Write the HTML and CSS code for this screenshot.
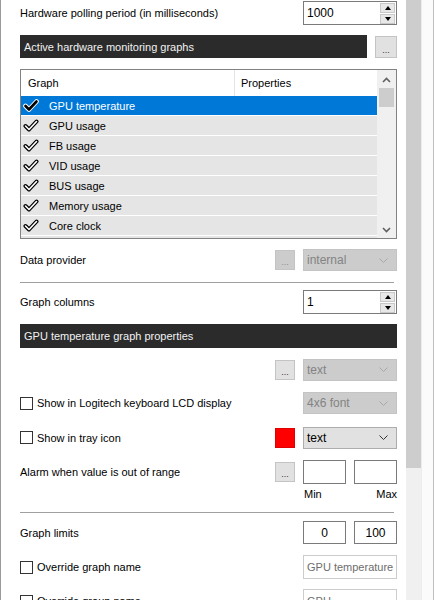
FILE: index.html
```html
<!DOCTYPE html>
<html lang="en">
<head>
    <meta charset="UTF-8">
    <meta name="viewport" content="width=device-width, initial-scale=1.0">
    <title>Monitoring properties</title>
    <link rel="stylesheet" href="styles.css">
</head>
<body>
    <div class="window">
        <div class="panel">
            <div class="row row-poll">
                <span class="label">Hardware polling period (in milliseconds)</span>
                <div class="spin">
                    <span class="spin-value">1000</span>
                    <div class="spin-btns"><span class="spin-btn"><i class="tri-up"></i></span><span class="spin-btn"><i class="tri-down"></i></span></div>
                </div>
            </div>

            <div class="row row-section1">
                <div class="section-title short">Active hardware monitoring graphs</div>
                <span class="dots">...</span>
            </div>

            <div class="list">
                <div class="list-main">
                    <div class="list-head"><span class="col-graph">Graph</span><span class="col-props">Properties</span></div>
                    <div class="list-item selected"><svg class="check" viewBox="0 0 16 14"><path d="M2.5 7 L6 10.5 L13.5 2.5" class="check-out"/><path d="M2.5 7 L6 10.5 L13.5 2.5" class="check-in"/></svg>GPU temperature</div>
                    <div class="list-item"><svg class="check" viewBox="0 0 16 14"><path d="M2.5 7 L6 10.5 L13.5 2.5" class="check-out"/><path d="M2.5 7 L6 10.5 L13.5 2.5" class="check-in"/></svg>GPU usage</div>
                    <div class="list-item"><svg class="check" viewBox="0 0 16 14"><path d="M2.5 7 L6 10.5 L13.5 2.5" class="check-out"/><path d="M2.5 7 L6 10.5 L13.5 2.5" class="check-in"/></svg>FB usage</div>
                    <div class="list-item"><svg class="check" viewBox="0 0 16 14"><path d="M2.5 7 L6 10.5 L13.5 2.5" class="check-out"/><path d="M2.5 7 L6 10.5 L13.5 2.5" class="check-in"/></svg>VID usage</div>
                    <div class="list-item"><svg class="check" viewBox="0 0 16 14"><path d="M2.5 7 L6 10.5 L13.5 2.5" class="check-out"/><path d="M2.5 7 L6 10.5 L13.5 2.5" class="check-in"/></svg>BUS usage</div>
                    <div class="list-item"><svg class="check" viewBox="0 0 16 14"><path d="M2.5 7 L6 10.5 L13.5 2.5" class="check-out"/><path d="M2.5 7 L6 10.5 L13.5 2.5" class="check-in"/></svg>Memory usage</div>
                    <div class="list-item"><svg class="check" viewBox="0 0 16 14"><path d="M2.5 7 L6 10.5 L13.5 2.5" class="check-out"/><path d="M2.5 7 L6 10.5 L13.5 2.5" class="check-in"/></svg>Core clock</div>
                    <div class="list-peek"></div>
                </div>
                <div class="list-scroll">
                    <svg class="arrow" viewBox="0 0 9 6"><polyline points="1,5 4.5,1.5 8,5"/></svg>
                    <span class="list-thumb"></span>
                    <svg class="arrow arrow-down" viewBox="0 0 9 6"><polyline points="1,1 4.5,4.5 8,1"/></svg>
                </div>
            </div>

            <div class="row row-provider">
                <span class="label">Data provider</span>
                <div class="ctrls">
                    <span class="dots disabled">...</span>
                    <div class="combo disabled">internal<svg class="chev" viewBox="0 0 9 5"><polyline points="0.5,0.5 4.5,4.5 8.5,0.5"/></svg></div>
                </div>
            </div>

            <div class="sep sep1"></div>

            <div class="row row-columns">
                <span class="label">Graph columns</span>
                <div class="spin">
                    <span class="spin-value">1</span>
                    <div class="spin-btns"><span class="spin-btn"><i class="tri-up"></i></span><span class="spin-btn"><i class="tri-down"></i></span></div>
                </div>
            </div>

            <div class="section-title row-section2">GPU temperature graph properties</div>

            <div class="row row-text">
                <span class="label"></span>
                <div class="ctrls">
                    <span class="dots">...</span>
                    <div class="combo disabled">text<svg class="chev" viewBox="0 0 9 5"><polyline points="0.5,0.5 4.5,4.5 8.5,0.5"/></svg></div>
                </div>
            </div>

            <div class="row row-lcd">
                <label class="check-label"><span class="box"></span>Show in Logitech keyboard LCD display</label>
                <div class="combo disabled">4x6 font<svg class="chev" viewBox="0 0 9 5"><polyline points="0.5,0.5 4.5,4.5 8.5,0.5"/></svg></div>
            </div>

            <div class="row row-tray">
                <label class="check-label"><span class="box"></span>Show in tray icon</label>
                <div class="ctrls">
                    <span class="swatch"></span>
                    <div class="combo">text<svg class="chev" viewBox="0 0 9 5"><polyline points="0.5,0.5 4.5,4.5 8.5,0.5"/></svg></div>
                </div>
            </div>

            <div class="row row-alarm">
                <span class="label">Alarm when value is out of range</span>
                <div class="ctrls">
                    <span class="dots">...</span>
                    <div class="pair">
                        <span class="field small"></span>
                        <span class="field small"></span>
                    </div>
                </div>
            </div>
            <div class="minmax"><span>Min</span><span>Max</span></div>

            <div class="sep sep2"></div>

            <div class="row row-limits">
                <span class="label">Graph limits</span>
                <div class="pair">
                    <span class="field small center">0</span>
                    <span class="field small center">100</span>
                </div>
            </div>

            <div class="row row-name">
                <label class="check-label"><span class="box"></span>Override graph name</label>
                <span class="field wide disabled">GPU temperature</span>
            </div>

            <div class="row row-group">
                <label class="check-label"><span class="box"></span>Override group name</label>
                <span class="field wide disabled">GPU</span>
            </div>
        </div>

        <div class="vscroll"><div class="vthumb"></div></div>
        <div class="frame"></div>
    </div>
</body>
</html>
```

FILE: styles.css
```css
body {
    margin: 0;
    font-family: "Liberation Sans", Arial, sans-serif;
    font-size: 11px;
    color: #000;
    background: #fff;
}
.window {
    display: flex;
    height: 600px;
    overflow: hidden;
    border-left: 1px solid #9a9a9a;
}
.panel {
    flex: none;
    width: 377px;
    padding: 1px 9px 0 19px;
}
.row {
    display: flex;
    align-items: center;
    justify-content: space-between;
}
.label {
    flex: 1;
}
.ctrls {
    display: flex;
    align-items: center;
    gap: 8px;
}
.pair {
    display: flex;
    gap: 8px;
}

/* spin box */
.spin {
    box-sizing: border-box;
    width: 94px;
    height: 24px;
    border: 1px solid #7a7a7a;
    display: flex;
    align-items: center;
    justify-content: space-between;
    padding: 0 1px 0 3px;
    font-size: 12px;
}
.spin-btns {
    display: flex;
    flex-direction: column;
    gap: 1px;
}
.spin-btn {
    box-sizing: border-box;
    width: 15px;
    height: 10px;
    background: #e8e8e8;
    border: 1px solid #c8c8c8;
    display: flex;
    align-items: center;
    justify-content: center;
}
.tri-up, .tri-down {
    width: 0;
    height: 0;
    border-left: 3px solid transparent;
    border-right: 3px solid transparent;
}
.tri-up { border-bottom: 4px solid #000; }
.tri-down { border-top: 4px solid #000; }

/* dark section headers */
.section-title {
    box-sizing: border-box;
    height: 24px;
    background: #2b2b2b;
    color: #f2f2f2;
    display: flex;
    align-items: center;
    padding-left: 4px;
}
.section-title.short {
    width: 347px;
    height: 23px;
}
.dots {
    box-sizing: border-box;
    width: 20px;
    height: 20px;
    background: #e1e1e1;
    border: 1px solid #c4c4c4;
    display: flex;
    align-items: flex-end;
    justify-content: center;
    font-size: 9px;
    line-height: 14px;
    color: #333;
}
.row-section1 .dots {
    width: 22px;
    height: 22px;
}
.dots.disabled {
    background: #cccccc;
    border-color: #c4c4c4;
    color: #8d8d8d;
}

/* list */
.list {
    box-sizing: border-box;
    height: 170px;
    border: 1px solid #828282;
    display: flex;
    overflow: hidden;
}
.list-main {
    flex: 1;
    overflow: hidden;
}
.list-head {
    height: 26px;
    display: flex;
    align-items: center;
}
.col-graph {
    box-sizing: border-box;
    width: 214px;
    padding-left: 7px;
    height: 26px;
    line-height: 26px;
    border-right: 1px solid #e5e5e5;
}
.col-props {
    padding-left: 6px;
}
.list-item {
    height: 19px;
    margin-bottom: 1px;
    background: #e5e5e5;
    display: flex;
    align-items: center;
    padding-left: 2px;
}
.list-item.selected {
    background: #0078d7;
    color: #fff;
}
.list-peek {
    height: 2px;
    background: #e5e5e5;
}
.check {
    width: 16px;
    height: 14px;
    margin-right: 10px;
}
.check-out {
    fill: none;
    stroke: #000;
    stroke-width: 4;
    stroke-linecap: round;
    stroke-linejoin: round;
}
.check-in {
    fill: none;
    stroke: #fff;
    stroke-width: 1.6;
    stroke-linecap: round;
    stroke-linejoin: round;
}
.selected .check-out { stroke: #fff; stroke-width: 4.6; }
.selected .check-in { stroke: #000; stroke-width: 2.6; }
.list-scroll {
    width: 19px;
    background: #f0f0f0;
    display: flex;
    flex-direction: column;
    align-items: center;
}
.arrow {
    width: 9px;
    height: 6px;
    margin: 7px 0 5px;
    fill: none;
    stroke: #606060;
    stroke-width: 1.6;
}
.arrow-down {
    margin: auto 0 5px;
}
.list-thumb {
    width: 15px;
    height: 19px;
    background: #cdcdcd;
}

/* combos, fields */
.combo {
    box-sizing: border-box;
    width: 94px;
    height: 22px;
    background: #e1e1e1;
    border: 1px solid #adadad;
    display: flex;
    align-items: center;
    justify-content: space-between;
    padding: 0 8px 0 3px;
    font-size: 12px;
}
.combo.disabled {
    background: #cccccc;
    border-color: #c4c4c4;
    color: #838383;
}
.chev {
    width: 9px;
    height: 5px;
    fill: none;
    stroke: #333;
    stroke-width: 1;
}
.combo.disabled .chev {
    stroke: #a8a8a8;
}
.field {
    box-sizing: border-box;
    height: 24px;
    border: 1px solid #7a7a7a;
    background: #fff;
    display: flex;
    align-items: center;
    padding-left: 3px;
    font-size: 12px;
    white-space: nowrap;
    overflow: hidden;
}
.field.small {
    width: 43px;
}
.field.center {
    justify-content: center;
    padding-left: 0;
}
.field.wide {
    width: 94px;
    font-size: 11px;
}
.field.disabled {
    border-color: #cccccc;
    color: #6d6d6d;
}
.swatch {
    box-sizing: border-box;
    width: 20px;
    height: 20px;
    background: #ff0000;
    border: 1px solid #e00000;
}
.check-label {
    display: flex;
    align-items: center;
}
.box {
    box-sizing: border-box;
    width: 13px;
    height: 13px;
    border: 1px solid #333;
    background: #fff;
    margin-right: 4px;
}
.sep {
    width: 374px;
    height: 1px;
    background: #a0a0a0;
}
.minmax {
    display: flex;
    justify-content: space-between;
    padding-left: 284px;
    height: 14px;
    line-height: 14px;
}

/* vertical spacing */
.row-poll { height: 24px; }
.row-section1 { height: 23px; margin-top: 10px; }
.list { margin-top: 11px; }
.row-provider { height: 22px; margin-top: 10px; }
.sep1 { margin-top: 11px; }
.row-columns { height: 24px; margin-top: 7px; }
.row-section2 { margin-top: 10px; }
.row-text { height: 23px; margin-top: 10px; }
.row-lcd { height: 22px; margin-top: 11px; }
.row-tray { height: 21px; margin-top: 13px; }
.row-alarm { height: 24px; margin-top: 12px; }
.minmax { margin-top: 3px; }
.sep2 { margin-top: 11px; }
.row-limits { height: 23px; margin-top: 8px; }
.row-limits .field { height: 23px; }
.row-name { height: 24px; margin-top: 11px; }
.row-group { height: 24px; margin-top: 10px; }

/* window scrollbar */
.vscroll {
    flex: none;
    width: 15px;
    background: #f0f0f0;
}
.vthumb {
    height: 468px;
    background: #cdcdcd;
}
.frame {
    flex: none;
    width: 11px;
    background: #fbfbfb;
    border-left: 1px solid #ececec;
    border-right: 1px solid #c0c0c0;
}
```
